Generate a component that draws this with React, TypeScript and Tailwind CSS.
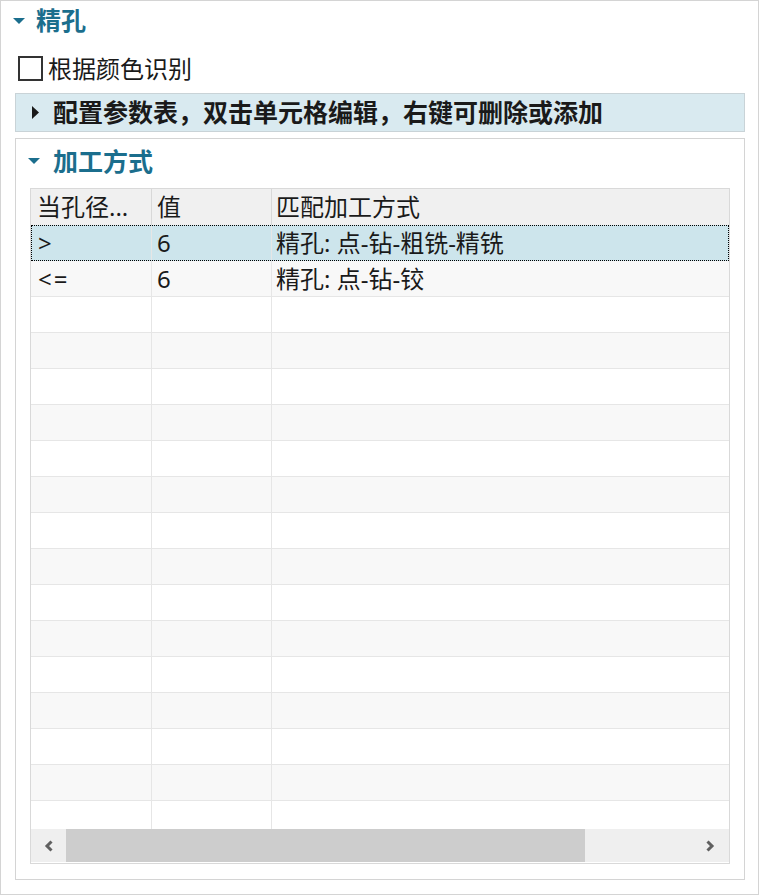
import React from 'react';

const font = { fontFamily: '"Noto Sans", "Noto Sans CJK SC", sans-serif' };

const DownTri = ({ className = '' }: { className?: string }) => (
  <svg width="12" height="6" viewBox="0 0 12 6" className={className}>
    <path d="M0 0 L12 0 L6 6 Z" fill="#1b6e8d" />
  </svg>
);

const RightTri = () => (
  <svg width="7" height="13" viewBox="0 0 7 13">
    <path d="M0 0 L7 6.5 L0 13 Z" fill="#1a1a1a" />
  </svg>
);

const rows = [
  { op: '>', val: '6', way: '精孔: 点-钻-粗铣-精铣' },
  { op: '<=', val: '6', way: '精孔: 点-钻-铰' },
];

export default function App() {
  const blank = Array.from({ length: 15 });

  return (
    <div className="w-[760px] h-[896px] bg-white text-[#1a1a1a]" style={font}>
      <div className="w-[759px] h-[895px] border border-[#d4d4d4] flex flex-col">
        {/* 精孔 */}
        <div className="h-[39px] flex items-center">
          <DownTri className="ml-[12px]" />
          <span className="ml-[11px] text-[25px] font-bold text-[#1b6e8d] leading-none">精孔</span>
        </div>

        <div className="mt-[16px] h-[25px] flex items-center">
          <div className="ml-[17px] w-[25px] h-[25px] border-2 border-[#333]" />
          <span className="ml-[5px] text-[24px] leading-none">根据颜色识别</span>
        </div>

        {/* config bar */}
        <div className="mt-[12px] ml-[14px] w-[730px] h-[39px] bg-[#d9eaf0] border border-[#c9d3d7] flex items-center">
          <div className="ml-[16px] flex"><RightTri /></div>
          <span className="ml-[14px] text-[25px] font-bold leading-none">配置参数表，双击单元格编辑，右键可删除或添加</span>
        </div>

        {/* 加工方式 */}
        <div className="mt-[6px] ml-[14px] w-[730px] h-[742px] border border-[#d4d4d4] flex flex-col">
          <div className="h-[44px] flex items-center">
            <DownTri className="ml-[12px]" />
            <span className="ml-[13px] text-[25px] font-bold text-[#1b6e8d] leading-none">加工方式</span>
          </div>

          <div className="mt-[5px] ml-[14px] w-[700px] h-[676px] border border-[#d9d9d9] flex flex-col overflow-hidden">
            {/* header */}
            <div className="h-[36px] flex bg-[#f0f0f0] text-[24px] shrink-0">
              <div className="w-[121px] border-r border-[#d8d8d8] pl-[6px] flex items-center whitespace-nowrap">当孔径...</div>
              <div className="w-[120px] border-r border-[#d8d8d8] pl-[5px] flex items-center">值</div>
              <div className="flex-1 pl-[4px] flex items-center">匹配加工方式</div>
            </div>

            <div className="flex-1 flex flex-col overflow-hidden">
              {rows.map((r, i) => (
                <div
                  key={i}
                  className={
                    i === 0
                      ? 'h-[36px] shrink-0 flex text-[24px] bg-[#cde5ec] border border-dotted border-black'
                      : 'h-[36px] shrink-0 flex text-[24px] bg-[#f8f8f8] border-b border-[#e6e6e6]'
                  }
                >
                  <div className={i === 0 ? 'w-[120px] border-r border-[#e6e6e6] pl-[6px] flex items-center' : 'w-[121px] border-r border-[#e6e6e6] pl-[7px] flex items-center tracking-[2px]'}>
                    {r.op}
                  </div>
                  <div className="w-[120px] border-r border-[#e6e6e6] pl-[5px] flex items-center">{r.val}</div>
                  <div className="flex-1 pl-[4px] flex items-center">{r.way}</div>
                </div>
              ))}
              {blank.map((_, i) => (
                <div
                  key={i}
                  className={
                    i % 2 === 1
                      ? 'h-[36px] shrink-0 flex bg-[#f8f8f8] border-b border-[#e6e6e6]'
                      : 'h-[36px] shrink-0 flex bg-white border-b border-[#e6e6e6]'
                  }
                >
                  <div className="w-[121px] border-r border-[#e6e6e6]" />
                  <div className="w-[120px] border-r border-[#e6e6e6]" />
                  <div className="flex-1" />
                </div>
              ))}
            </div>

            {/* horizontal scrollbar */}
            <div className="h-[33px] shrink-0 flex bg-[#efefef] mb-[1px]">
              <div className="w-[35px] flex items-center justify-center">
                <svg width="10" height="12" viewBox="0 0 10 12">
                  <path d="M7.5 1.5 L3 6 L7.5 10.5" stroke="#606060" strokeWidth="3" fill="none" />
                </svg>
              </div>
              <div className="w-[519px] bg-[#cdcdcd]" />
              <div className="flex-1 flex items-center justify-end pr-[14px]">
                <svg width="10" height="12" viewBox="0 0 10 12">
                  <path d="M2.5 1.5 L7 6 L2.5 10.5" stroke="#606060" strokeWidth="3" fill="none" />
                </svg>
              </div>
            </div>
          </div>
        </div>
      </div>
    </div>
  );
}
